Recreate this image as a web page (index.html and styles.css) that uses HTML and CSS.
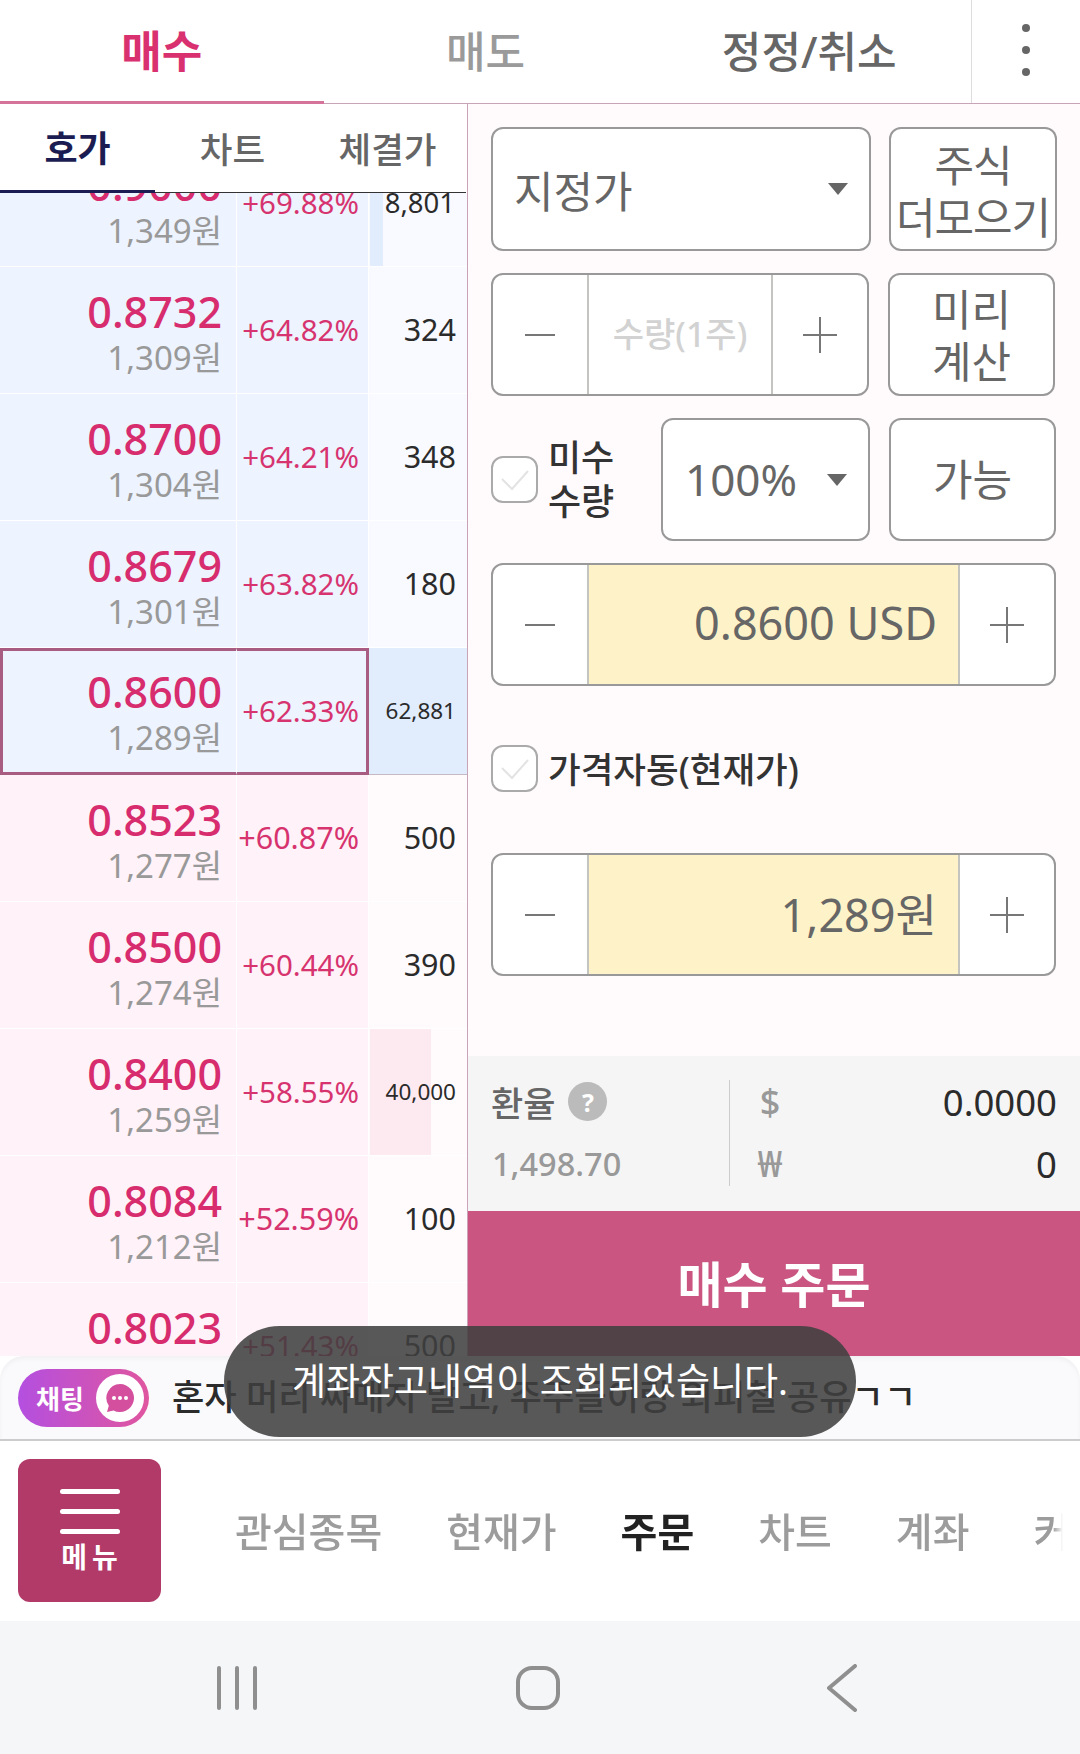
FILE: index.html
```html
<!DOCTYPE html>
<html lang="ko">
<head>
  <meta charset="UTF-8" />
  <title>매수 주문</title>
  <link rel="stylesheet" href="styles.css">
</head>
<body>

  <!-- Top Tabs -->
  <div class="top-tabs">
    <div class="top-tab active">매수</div>
    <div class="top-tab muted">매도</div>
    <div class="top-tab">정정/취소</div>
    <div class="more"><span></span><span></span><span></span></div>
  </div>

  <div class="order">

    <!-- Order Book -->
    <div class="book">
      <div class="sub-tabs">
        <div class="sub-tab active">호가</div>
        <div class="sub-tab">차트</div>
        <div class="sub-tab">체결가</div>
      </div>
      <div class="rows">
        <div class="row ask">
          <div class="c-price"><b>0.9000</b><span>1,349원</span></div>
          <div class="c-pct">+69.88%</div>
          <div class="c-qty small"><i class="bar" style="width: 13px"></i><em>8,801</em></div>
        </div>
        <div class="row ask">
          <div class="c-price"><b>0.8732</b><span>1,309원</span></div>
          <div class="c-pct">+64.82%</div>
          <div class="c-qty"><em>324</em></div>
        </div>
        <div class="row ask">
          <div class="c-price"><b>0.8700</b><span>1,304원</span></div>
          <div class="c-pct">+64.21%</div>
          <div class="c-qty"><em>348</em></div>
        </div>
        <div class="row ask">
          <div class="c-price"><b>0.8679</b><span>1,301원</span></div>
          <div class="c-pct">+63.82%</div>
          <div class="c-qty"><em>180</em></div>
        </div>
        <div class="row ask current">
          <div class="c-price"><b>0.8600</b><span>1,289원</span></div>
          <div class="c-pct">+62.33%</div>
          <div class="c-qty tiny"><i class="bar" style="width: 100%"></i><em>62,881</em></div>
        </div>
        <div class="row bid">
          <div class="c-price"><b>0.8523</b><span>1,277원</span></div>
          <div class="c-pct wide">+60.87%</div>
          <div class="c-qty"><em>500</em></div>
        </div>
        <div class="row bid">
          <div class="c-price"><b>0.8500</b><span>1,274원</span></div>
          <div class="c-pct">+60.44%</div>
          <div class="c-qty"><em>390</em></div>
        </div>
        <div class="row bid">
          <div class="c-price"><b>0.8400</b><span>1,259원</span></div>
          <div class="c-pct">+58.55%</div>
          <div class="c-qty tiny"><i class="bar" style="width: 61px"></i><em>40,000</em></div>
        </div>
        <div class="row bid">
          <div class="c-price"><b>0.8084</b><span>1,212원</span></div>
          <div class="c-pct wide">+52.59%</div>
          <div class="c-qty"><em>100</em></div>
        </div>
        <div class="row bid">
          <div class="c-price"><b>0.8023</b><span>1,202원</span></div>
          <div class="c-pct">+51.43%</div>
          <div class="c-qty"><em>500</em></div>
        </div>
      </div>
    </div>

    <!-- Order Form -->
    <div class="panel">
      <div class="form">
        <div class="form-row row-first">
          <div class="box select select-type">지정가<i class="caret"></i></div>
          <div class="box btn btn-first">주식<br>더모으기</div>
        </div>

        <div class="form-row">
          <div class="box stepper stepper-qty">
            <div class="step"><svg width="30" height="36" viewBox="0 0 30 36"><path d="M0 18H30" stroke="#777" stroke-width="2"/></svg></div>
            <div class="field placeholder">수량(1주)</div>
            <div class="step"><svg width="34" height="36" viewBox="0 0 34 36"><path d="M0 18H34M17 0V36" stroke="#777" stroke-width="2"/></svg></div>
          </div>
          <div class="box btn btn-two">미리<br>계산</div>
        </div>

        <div class="form-row">
          <div class="check-label">
            <div class="check"><svg width="30" height="24" viewBox="0 0 30 24"><path d="M2 11L12 21L28 3" fill="none" stroke="#e3e3e3" stroke-width="2"/></svg></div>
            <span>미수<br>수량</span>
          </div>
          <div class="box select select-pct">100%<i class="caret"></i></div>
          <div class="box btn">가능</div>
        </div>

        <div class="box stepper stepper-wide">
          <div class="step"><svg width="30" height="36" viewBox="0 0 30 36"><path d="M0 18H30" stroke="#777" stroke-width="2"/></svg></div>
          <div class="field value">0.8600 USD</div>
          <div class="step"><svg width="34" height="36" viewBox="0 0 34 36"><path d="M0 18H34M17 0V36" stroke="#777" stroke-width="2"/></svg></div>
        </div>

        <div class="auto-row">
          <div class="check"><svg width="30" height="24" viewBox="0 0 30 24"><path d="M2 11L12 21L28 3" fill="none" stroke="#e3e3e3" stroke-width="2"/></svg></div>
          <span>가격자동(현재가)</span>
        </div>

        <div class="box stepper stepper-wide">
          <div class="step"><svg width="30" height="36" viewBox="0 0 30 36"><path d="M0 18H30" stroke="#777" stroke-width="2"/></svg></div>
          <div class="field value">1,289원</div>
          <div class="step"><svg width="34" height="36" viewBox="0 0 34 36"><path d="M0 18H34M17 0V36" stroke="#777" stroke-width="2"/></svg></div>
        </div>
      </div>

      <!-- Exchange Rate -->
      <div class="fx">
        <div class="fx-left">
          <div class="fx-title">환율<span class="help">?</span></div>
          <div class="fx-rate">1,498.70</div>
        </div>
        <div class="fx-right">
          <div class="fx-row"><span class="cur">$</span><span>0.0000</span></div>
          <div class="fx-row"><span class="cur">₩</span><span>0</span></div>
        </div>
      </div>

      <div class="submit">매수 주문</div>
    </div>
  </div>

  <!-- Chat Ticker -->
  <div class="ticker-wrap">
    <div class="ticker">
      <div class="chat-pill">
        채팅
        <div class="chat-dot">
          <svg width="32" height="32" viewBox="0 0 32 32">
            <path d="M16 2a14 14 0 1 1-6.5 26.4L3 30l1.8-6.2A14 14 0 0 1 16 2z" fill="#d4509f"/>
            <circle cx="10" cy="16" r="2" fill="#fff"/><circle cx="16" cy="16" r="2" fill="#fff"/><circle cx="22" cy="16" r="2" fill="#fff"/>
          </svg>
        </div>
      </div>
      <div class="ticker-text">혼자 머리 싸매지 말고, 주주들이랑 외피철 공유ㄱㄱ</div>
    </div>
  </div>

  <!-- Bottom Nav -->
  <div class="nav">
    <div class="menu-btn">
      <div class="burger"><span></span><span></span><span></span></div>
      <div class="menu-label">메뉴</div>
    </div>
    <div class="nav-items">
      <div>관심종목</div>
      <div>현재가</div>
      <div class="active">주문</div>
      <div>차트</div>
      <div>계좌</div>
      <div>커뮤니티</div>
    </div>
  </div>

  <!-- Android Bar -->
  <div class="sys-bar">
    <svg width="44" height="44" viewBox="0 0 44 44"><path d="M4 2V42M22 2V42M40 2V42" stroke="#8f8f8f" stroke-width="4" stroke-linecap="round"/></svg>
    <svg width="46" height="46" viewBox="0 0 46 46"><rect x="3" y="3" width="40" height="40" rx="14" fill="none" stroke="#8f8f8f" stroke-width="4"/></svg>
    <svg class="sys-back" width="32" height="48" viewBox="0 0 32 48"><path d="M29 2L3 24L29 46" fill="none" stroke="#8f8f8f" stroke-width="4" stroke-linecap="round" stroke-linejoin="round"/></svg>
  </div>

  <div class="toast">계좌잔고내역이 조회되었습니다.</div>

</body>
</html>
```

FILE: styles.css
```css
* {
  box-sizing: border-box;
  margin: 0;
  padding: 0;
}

body {
  position: relative;
  width: 1080px;
  height: 1754px;
  overflow: hidden;
  background: #fff;
  color: #333;
  font-family: "Noto Sans", "Noto Sans CJK KR", sans-serif;
}

/* Top Tabs */
.top-tabs {
  display: flex;
  height: 104px;
  border-bottom: 1px solid #c9a3b8;
}

.top-tab {
  width: 324px;
  display: flex;
  align-items: center;
  justify-content: center;
  font-size: 43px;
  font-weight: 500;
  color: #666;
  padding-bottom: 4px;
}

.top-tab.muted {
  color: #9a9a9a;
}

.top-tab.active {
  color: #d9316f;
  font-size: 44px;
  font-weight: 700;
  border-bottom: 3px solid #d6739b;
  margin-bottom: -1px;
  padding-bottom: 3px;
}

.more {
  width: 109px;
  border-left: 1px solid #ddd;
  display: flex;
  flex-direction: column;
  align-items: center;
  justify-content: center;
  gap: 14px;
  padding-bottom: 4px;
}

.more span {
  width: 8px;
  height: 8px;
  border-radius: 50%;
  background: #666;
}

.order {
  display: flex;
  height: 1252px;
}

/* Order Book */
.book {
  width: 468px;
  display: flex;
  flex-direction: column;
  border-right: 1px solid #c9a3b8;
  background: #fff;
}

.sub-tabs {
  display: flex;
  height: 89px;
  margin-right: 1px;
  border-bottom: 1px solid #333;
}

.sub-tab {
  width: 155px;
  display: flex;
  align-items: center;
  justify-content: center;
  padding-bottom: 2px;
  font-size: 35.5px;
  font-weight: 500;
  color: #666;
}

.sub-tab.active {
  color: #1b1d52;
  font-size: 36px;
  font-weight: 700;
  border-bottom: 3px solid #1b1d52;
  margin-bottom: -1px;
}

.rows {
  flex: 1;
  overflow: hidden;
}

.row {
  display: flex;
  height: 127px;
}

.row:first-child {
  margin-top: -53px;
}

.row > div {
  border-bottom: 1px solid #fff;
}

.c-price {
  width: 237px;
  border-right: 1px solid #fff;
  display: flex;
  flex-direction: column;
  align-items: flex-end;
  justify-content: center;
  padding: 9px 14px 0 0;
}

.c-price b {
  font-size: 43px;
  line-height: 46px;
  font-weight: 500;
  color: #d72c6d;
}

.c-price span {
  font-size: 33px;
  line-height: 46px;
  color: #999;
}

.c-pct {
  width: 132px;
  border-right: 1px solid #fff;
  display: flex;
  align-items: center;
  justify-content: flex-end;
  padding: 0 9px 2px 0;
  font-size: 29.5px;
  color: #d6336f;
}

.c-pct.wide {
  font-size: 30.5px;
}

.c-qty {
  position: relative;
  flex: 1;
  display: flex;
  align-items: center;
  justify-content: flex-end;
  padding: 0 11px 2px 0;
  font-size: 30.5px;
  color: #2b2b2b;
}

.c-qty em {
  position: relative;
  font-style: normal;
}

.c-qty.small {
  font-size: 27.5px;
  padding-right: 12px;
}

.c-qty.tiny {
  font-size: 22.5px;
}

.bar {
  position: absolute;
  left: 1px;
  top: 0;
  bottom: 0;
}

.ask .c-price,
.ask .c-pct {
  background: #edf3ff;
}

.ask .c-qty {
  background: #f8faff;
}

.ask .bar {
  background: #e1edfd;
}

.current .c-price {
  border: 3px solid #a85c82;
  border-right: 1px solid #fff;
  padding-top: 6px;
}

.current .c-pct {
  border: 3px solid #a85c82;
  border-left: 0;
  padding-right: 7px;
}

.current > .c-qty {
  border-bottom: 1px solid #c7b9c4;
}

.current .bar {
  left: 0;
}

.bid .c-price,
.bid .c-pct {
  background: #fff2f8;
}

.bid .c-qty {
  background: #fffbfd;
}

.bid .bar {
  background: #fdeaf1;
}

/* Order Form */
.panel {
  flex: 1;
  display: flex;
  flex-direction: column;
  background: #fffafc;
}

.form {
  flex: 1;
  padding: 23px 23px 0;
}

.form-row {
  display: flex;
  gap: 19px;
  height: 123px;
  margin-bottom: 22px;
  align-items: stretch;
}

.row-first {
  height: 124px;
  gap: 18px;
}

.box {
  background: #fff;
  border: 2px solid #999;
  border-radius: 12px;
  color: #666;
  font-size: 43px;
}

.select {
  position: relative;
  display: flex;
  align-items: center;
  padding-left: 21px;
}

.select-type {
  width: 380px;
}

.select-pct {
  width: 209px;
  padding: 0 0 2px 22px;
  font-size: 44px;
}

.caret {
  position: absolute;
  right: 21px;
  top: 50%;
  margin-top: -6px;
  border-left: 10px solid transparent;
  border-right: 10px solid transparent;
  border-top: 12px solid #666;
}

.btn {
  width: 167px;
  display: flex;
  align-items: center;
  justify-content: center;
  text-align: center;
  line-height: 52px;
  white-space: nowrap;
}

.btn-first {
  width: 168px;
  padding-top: 5px;
  letter-spacing: -1px;
}

.btn-two {
  padding-top: 2px;
}

.stepper {
  display: flex;
  overflow: hidden;
}

.stepper-qty {
  width: 378px;
}

.stepper-wide {
  width: 565px;
  height: 123px;
}

.step {
  width: 94px;
  flex: none;
  display: flex;
  align-items: center;
  justify-content: center;
}

.field {
  flex: 1;
  display: flex;
  align-items: center;
  border-left: 2px solid #c4c4c0;
  border-right: 2px solid #c4c4c0;
}

.placeholder {
  justify-content: center;
  padding-bottom: 4px;
  font-size: 34px;
  color: #d2d2d2;
  font-weight: 500;
}

.value {
  justify-content: flex-end;
  padding: 0 21px 4px 0;
  background: #fef3c8;
  color: #666;
  font-size: 45px;
}

.check {
  width: 47px;
  height: 47px;
  flex: none;
  display: flex;
  align-items: center;
  justify-content: center;
  background: #fff;
  border: 2px solid #aaa;
  border-radius: 12px;
}

.check-label {
  width: 151px;
  display: flex;
  align-items: center;
  gap: 10px;
  font-size: 36px;
  line-height: 44px;
  font-weight: 500;
}

.check-label span {
  padding-top: 1px;
}

.auto-row {
  display: flex;
  align-items: center;
  gap: 10px;
  height: 47px;
  margin: 59px 0 61px;
  font-size: 35.5px;
  font-weight: 500;
  white-space: nowrap;
}

.auto-row span {
  padding-bottom: 2px;
}

/* Exchange Rate */
.fx {
  height: 155px;
  display: flex;
  align-items: center;
  padding-bottom: 2px;
  background: #f5f5f5;
}

.fx-left {
  width: 261px;
  padding-left: 23px;
  display: flex;
  flex-direction: column;
  gap: 18px;
}

.fx-title {
  height: 44px;
  display: flex;
  align-items: center;
  gap: 13px;
  font-size: 35px;
  font-weight: 500;
  color: #666;
}

.help {
  width: 39px;
  height: 39px;
  border-radius: 50%;
  background: #bbb;
  color: #fff;
  display: flex;
  align-items: center;
  justify-content: center;
  font-size: 25px;
  font-weight: 700;
}

.fx-rate {
  height: 44px;
  line-height: 44px;
  padding-left: 1px;
  font-size: 32.5px;
  color: #999;
  font-weight: 500;
}

.fx-right {
  flex: 1;
  height: 106px;
  border-left: 1px solid #ccc;
  padding: 0 23px 0 26px;
  display: flex;
  flex-direction: column;
  gap: 18px;
}

.fx-row {
  height: 44px;
  display: flex;
  align-items: center;
  justify-content: space-between;
  font-size: 36.5px;
  color: #2b2b2b;
}

.cur {
  width: 28px;
  text-align: center;
  font-size: 36px;
  font-weight: 500;
  color: #999;
}

.submit {
  height: 145px;
  display: flex;
  align-items: center;
  justify-content: center;
  padding-bottom: 4px;
  background: #c95580;
  color: #fff;
  font-size: 49px;
  font-weight: 700;
}

/* Chat Ticker */
.ticker-wrap {
  height: 85px;
  background: #fff;
  border-bottom: 2px solid #ccc;
}

.ticker {
  height: 83px;
  display: flex;
  align-items: center;
  gap: 23px;
  padding: 0 18px;
  border-radius: 24px 24px 0 0;
  background: #fafafc;
  box-shadow: inset 0 3px 4px rgba(0, 0, 0, 0.04);
}

.chat-pill {
  width: 131px;
  height: 58px;
  display: flex;
  align-items: center;
  justify-content: space-between;
  padding: 0 5px 0 18px;
  border-radius: 29px;
  background: linear-gradient(to right, #b44fe0, #e0569f);
  color: #fff;
  font-size: 26px;
  font-weight: 700;
}

.chat-dot {
  width: 48px;
  height: 48px;
  border-radius: 50%;
  background: #fff;
  display: flex;
  align-items: center;
  justify-content: center;
}

.ticker-text {
  padding-bottom: 6px;
  font-size: 35.2px;
  font-weight: 500;
  color: #2b2b2b;
  white-space: nowrap;
}

/* Bottom Nav */
.nav {
  height: 180px;
  display: flex;
  align-items: center;
  padding: 0 0 2px 18px;
  background: #fff;
}

.menu-btn {
  width: 143px;
  height: 143px;
  flex: none;
  border-radius: 12px;
  background: #b23a68;
  color: #fff;
  display: flex;
  flex-direction: column;
  align-items: center;
  padding-top: 30px;
}

.burger {
  display: flex;
  flex-direction: column;
  gap: 15px;
}

.burger span {
  display: block;
  width: 60px;
  height: 5px;
  border-radius: 3px;
  background: #fff;
}

.menu-label {
  margin-top: 4px;
  font-size: 28px;
  line-height: 38px;
  font-weight: 700;
  letter-spacing: 5px;
  padding-left: 5px;
}

.nav-items {
  display: flex;
  gap: 64px;
  width: 902px;
  padding-left: 74px;
  overflow: hidden;
  white-space: nowrap;
  font-size: 40px;
  font-weight: 500;
  color: #9c9c9c;
  -webkit-mask-image: linear-gradient(to right, #000 calc(100% - 10px), transparent 100%);
  mask-image: linear-gradient(to right, #000 calc(100% - 10px), transparent 100%);
}

.nav-items .active {
  color: #222;
  font-weight: 700;
}

/* Android Bar */
.sys-bar {
  height: 133px;
  display: flex;
  align-items: center;
  gap: 256px;
  padding-left: 215px;
  background: #f5f6f8;
}

.sys-back {
  margin-left: 9px;
}

/* Toast */
.toast {
  position: absolute;
  left: 224px;
  top: 1326px;
  width: 632px;
  height: 111px;
  border-radius: 56px;
  display: flex;
  align-items: center;
  justify-content: center;
  padding-bottom: 6px;
  background: rgba(63, 63, 63, 0.87);
  color: #fff;
  font-size: 37px;
}
```
